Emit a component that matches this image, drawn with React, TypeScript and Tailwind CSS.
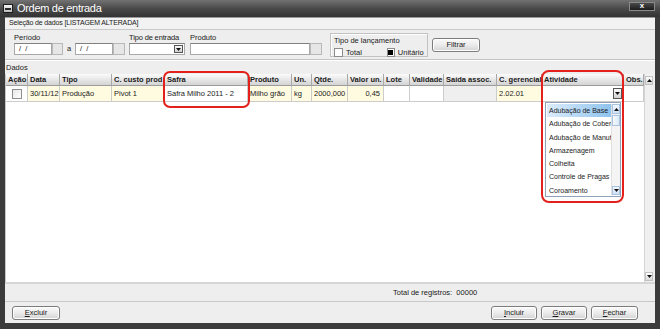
import React from "react";

type Col = { h: string; w: string; v: string; bg: string; align?: string };

const cols: Col[] = [
  { h: "Ação", w: "w-[22px]", v: "", bg: "bg-white" },
  { h: "Data", w: "w-[32px]", v: "30/11/12", bg: "bg-[#fffbe1]" },
  { h: "Tipo", w: "w-[52px]", v: "Produção", bg: "bg-[#fffbe1]" },
  { h: "C. custo prod", w: "w-[53px]", v: "Pivot 1", bg: "bg-[#fffbe1]" },
  { h: "Safra", w: "w-[83px]", v: "Safra Milho 2011 - 2", bg: "bg-white" },
  { h: "Produto", w: "w-[44px]", v: "Milho grão", bg: "bg-[#fffbe1]" },
  { h: "Un.", w: "w-[20px]", v: "kg", bg: "bg-[#fffbe1]" },
  { h: "Qtde.", w: "w-[36px]", v: "2000,000", bg: "bg-[#fffbe1]" },
  { h: "Valor un.", w: "w-[36px]", v: "0,45", bg: "bg-[#fffbe1]", align: "justify-end pr-[3px]" },
  { h: "Lote", w: "w-[26px]", v: "", bg: "bg-white" },
  { h: "Validade", w: "w-[34px]", v: "", bg: "bg-white" },
  { h: "Saída assoc.", w: "w-[53px]", v: "", bg: "bg-[#efefef]" },
  { h: "C. gerencial", w: "w-[45px]", v: "2.02.01", bg: "bg-[#fffbe1]" },
  { h: "Atividade", w: "w-[82px]", v: "", bg: "bg-white" },
  { h: "Obs.", w: "w-[20px]", v: "", bg: "bg-white" },
];

const items = [
  "Adubação de Base",
  "Adubação de Cobertura",
  "Adubação de Manutenção",
  "Armazenagem",
  "Colheita",
  "Controle de Pragas",
  "Coroamento",
];

function Btn({ w, children }: { w: string; children: React.ReactNode }) {
  return (
    <div
      className={`${w} h-[14px] rounded-[3px] border border-[#7c7c7c] bg-gradient-to-b from-[#fbfbfb] via-[#ebebeb] to-[#d3d3d3] flex items-center justify-center text-[7.5px] text-[#1a1a1a] shadow-[inset_0_0_0_1px_#ffffff]`}
    >
      {children}
    </div>
  );
}

function Arrow({ up }: { up?: boolean }) {
  return (
    <svg width="5" height="3" viewBox="0 0 5 3">
      {up ? <path d="M0 3 L2.5 0 L5 3 Z" fill="#111" /> : <path d="M0 0 L5 0 L2.5 3 Z" fill="#111" />}
    </svg>
  );
}

export default function App() {
  return (
    <div className="relative w-[660px] h-[329px] bg-[#3b3b3b] flex flex-col overflow-hidden text-[7.5px] text-[#1a1a1a] font-['Liberation_Sans',Arial,sans-serif]">
      {/* Title bar */}
      <div className="h-[17px] shrink-0 flex items-center bg-gradient-to-b from-[#727272] via-[#4a4a4a] to-[#333333] pl-[3px] pr-[5px]">
        <div className="w-[10px] h-[9px] border border-[#1e1e1e] bg-gradient-to-b from-[#f6f6f6] to-[#bcbcbc] flex items-center justify-center">
          <div className="w-[6px] h-[2px] bg-[#2a2a2a]" />
        </div>
        <span className="ml-[4px] text-white text-[11px] leading-none tracking-[-0.3px]">Ordem de entrada</span>
        <div className="ml-auto -mt-[5px] w-[26px] h-[9px] bg-gradient-to-b from-[#4a4a4a] to-[#1c1c1c] border border-[#8a8a8a] flex items-center justify-center text-white text-[8px] font-bold leading-none">
          x
        </div>
      </div>

      {/* Content */}
      <div className="flex-1 mx-[5px] mb-[6px] bg-[#eeeeee] flex flex-col border-t border-[#9a9a9a]">
        {/* Seleção header */}
        <div className="h-[12px] shrink-0 flex items-center pl-[4px] bg-[#f2f2f2] border-b border-[#c9c9c9] text-[7px] tracking-[-0.15px]">
          Seleção de dados [LISTAGEM ALTERADA]
        </div>

        {/* Filters */}
        <div className="h-[30px] shrink-0 flex items-start pl-[9px] border-b border-[#c4c4c4]">
          <div className="flex flex-col mt-[3px]">
            <div className="h-[9px] leading-[9px]">Período</div>
            <div className="mt-[1px] flex items-center">
              <div className="w-[38px] h-[12px] bg-white border border-[#a8a8a8] border-t-[#808080] pl-[4px] leading-[10px] tracking-[1px]">/ /</div>
              <div className="w-[11px] h-[12px] bg-[#e6e6e6] border border-[#b8b8b8]" />
              <div className="w-[12px] text-center">a</div>
              <div className="w-[38px] h-[12px] bg-white border border-[#a8a8a8] border-t-[#808080] pl-[4px] leading-[10px] tracking-[1px]">/ /</div>
              <div className="w-[12px] h-[12px] bg-[#e6e6e6] border border-[#b8b8b8]" />
            </div>
          </div>
          <div className="flex flex-col mt-[3px] ml-[4px]">
            <div className="h-[9px] leading-[9px] tracking-[-0.15px]">Tipo de entrada</div>
            <div className="mt-[1px] w-[56px] h-[12px] bg-white border border-[#a8a8a8] border-t-[#808080] flex items-center justify-end pr-[1px]">
              <div className="w-[9px] h-[8px] border border-[#555] bg-gradient-to-b from-[#fafafa] to-[#cfcfcf] flex items-center justify-center">
                <Arrow />
              </div>
            </div>
          </div>
          <div className="flex flex-col mt-[3px] ml-[5px]">
            <div className="h-[9px] leading-[9px]">Produto</div>
            <div className="mt-[1px] flex">
              <div className="w-[120px] h-[12px] bg-white border border-[#a8a8a8] border-t-[#808080]" />
              <div className="w-[12px] h-[12px] bg-[#e6e6e6] border border-[#b8b8b8]" />
            </div>
          </div>
          <div className="ml-[8px] mt-[3px] w-[98px] h-[24px] border border-[#c2c2c2] shadow-[inset_1px_1px_0_#ffffff] flex flex-col pl-[3px]">
            <div className="h-[12px] leading-[12px] mt-[1px]">Tipo de lançamento</div>
            <div className="flex items-center">
              <div className="w-[9px] h-[9px] bg-white border border-[#8c8c8c]" />
              <span className="ml-[3px]">Total</span>
              <div className="ml-[25px] w-[8px] h-[9px] bg-white border border-[#8c8c8c] flex items-center justify-center">
                <div className="w-[5px] h-[5px] bg-black" />
              </div>
              <span className="ml-[3px]">Unitário</span>
            </div>
          </div>
          <div className="ml-[4px] mt-[8px]">
            <Btn w="w-[48px]">Filtrar</Btn>
          </div>
        </div>

        {/* Dados label */}
        <div className="h-[14px] shrink-0 flex items-center pl-[1px] border-t border-white">Dados</div>

        {/* Table */}
        <div className="h-[208px] shrink-0 flex bg-white border-l border-[#c8c8c8] mr-[2px]">
          <div className="flex flex-col">
            <div className="flex h-[12px]">
              {cols.map((c) => (
                <div
                  key={c.h}
                  className={`${c.w} h-[12px] shrink-0 overflow-hidden whitespace-nowrap font-bold pl-[2px] leading-[12px] bg-gradient-to-b from-[#fbfbfb] to-[#d4d4d4] border-r border-[#a9a9a9] border-b border-b-[#9c9c9c]`}
                >
                  {c.h}
                </div>
              ))}
            </div>
            <div className="flex h-[16px]">
              {cols.map((c, i) => (
                <div
                  key={c.h}
                  className={`${c.w} h-[16px] shrink-0 overflow-hidden whitespace-nowrap flex items-center ${c.align ?? "pl-[2px]"} ${c.bg} border-r border-b border-[#cccccc]`}
                >
                  {i === 0 ? (
                    <div className="ml-[4px] w-[10px] h-[10px] border border-[#8e8e8e] bg-gradient-to-br from-[#e8e8e8] to-[#ffffff]" />
                  ) : c.h === "Atividade" ? (
                    <div className="ml-auto mr-[1px] w-[9px] h-[11px] border border-[#555] bg-gradient-to-b from-[#fafafa] to-[#d2d2d2] flex items-center justify-center">
                      <Arrow />
                    </div>
                  ) : (
                    c.v
                  )}
                </div>
              ))}
            </div>
          </div>
          {/* vertical scrollbar */}
          <div className="w-[10px] flex flex-col bg-[#f0f0f0] border-l border-[#d4d4d4]">
            <div className="h-[12px] flex items-center justify-center">
              <div className="w-[8px] h-[9px] bg-gradient-to-b from-[#ffffff] to-[#dadada] border border-[#c2c2c2] flex items-center justify-center">
                <Arrow up />
              </div>
            </div>
            <div className="flex-1" />
            <div className="h-[11px] flex items-center justify-center">
              <div className="w-[8px] h-[9px] bg-gradient-to-b from-[#ffffff] to-[#dadada] border border-[#c2c2c2] flex items-center justify-center">
                <Arrow />
              </div>
            </div>
          </div>
        </div>

        {/* Footer total */}
        <div className="h-[19px] shrink-0 flex items-center pl-[388px] border-t-2 border-[#d6d6d6]">
          Total de registros:&nbsp;&nbsp;00000
        </div>

        {/* Buttons */}
        <div className="flex-1 flex items-center border-t border-[#c8c8c8] pl-[7px] pr-[17px]">
          <Btn w="w-[48px]"><span><u>E</u>xcluir</span></Btn>
          <div className="ml-auto flex gap-[4px]">
            <Btn w="w-[46px]"><span><u>I</u>ncluir</span></Btn>
            <Btn w="w-[46px]"><span><u>G</u>ravar</span></Btn>
            <Btn w="w-[47px]"><span><u>F</u>echar</span></Btn>
          </div>
        </div>
      </div>

      {/* Dropdown list overlay */}
      <div className="absolute left-[545px] top-[102px] w-[76px] h-[95px] bg-white border border-[#8ea2ba] flex pl-[1px] py-[1px] text-[7px]">
        <div className="flex-1 flex flex-col overflow-hidden">
          {items.map((t, i) => (
            <div
              key={t}
              className={`h-[13.3px] shrink-0 leading-[13.3px] pl-[2px] whitespace-nowrap overflow-hidden ${
                i === 0 ? "bg-gradient-to-r from-[#dcecfb] to-[#8ec3ee]" : ""
              }`}
            >
              {t}
            </div>
          ))}
        </div>
        <div className="w-[9px] flex flex-col bg-[#f4f4f4] border-l border-[#e0e0e0]">
          <div className="h-[10px] border border-[#a9c3e0] bg-gradient-to-b from-[#f2f8ff] to-[#cfe2f6] flex items-center justify-center">
            <Arrow up />
          </div>
          <div className="h-[11px] mt-[1px] border border-[#a9c3e0] bg-gradient-to-r from-[#f7fbff] to-[#dbe9f8]" />
          <div className="flex-1" />
          <div className="h-[9px] border border-[#a9c3e0] bg-gradient-to-b from-[#f2f8ff] to-[#cfe2f6] flex items-center justify-center">
            <Arrow />
          </div>
        </div>
      </div>

      {/* Red highlight boxes */}
      <div className="absolute left-[163px] top-[71px] w-[87px] h-[37px] border-2 border-[#e3201c] rounded-[7px]" />
      <div className="absolute left-[541px] top-[70px] w-[83px] h-[133px] border-2 border-[#e3201c] rounded-[8px]" />
    </div>
  );
}
